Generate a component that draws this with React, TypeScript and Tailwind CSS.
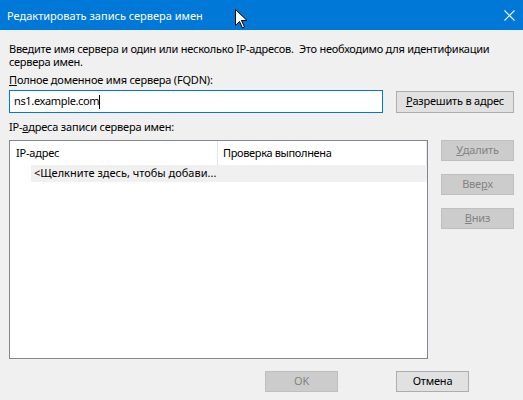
import React from "react";

const font = { fontFamily: '"Noto Sans", "Segoe UI", sans-serif' };

function DisabledButton({ label, u, rest, mt }: { label?: string; u?: string; rest?: string; mt?: string }) {
  return (
    <div
      className={`w-[73px] h-[21px] border border-[#bfbfbf] bg-[#cccccc] text-[#838383] flex items-center justify-center ${mt ?? ""}`}
    >
      {label}
      {u && <span className="underline">{u}</span>}
      {rest}
    </div>
  );
}

function Cursor() {
  return (
    <svg className="absolute left-[235px] top-[9px]" width="13" height="20" viewBox="0 0 13 20">
      <path
        d="M0.5 0.5 L0.5 16.5 L4.5 12.5 L7.5 19 L9.5 18 L6.5 11.5 L12 11.5 Z"
        fill="#fff"
        stroke="#000"
        strokeWidth="1"
      />
    </svg>
  );
}

export default function App() {
  return (
    <div
      className="relative w-[523px] h-[400px] bg-[#f0f0f0] flex flex-col text-[11px] tracking-[-0.2px] text-black"
      style={font}
    >
      {/* заголовок окна */}
      <div className="h-[30px] bg-[#0078d7] flex items-center justify-between pl-[7px] pr-[7px] text-white shrink-0">
        <span className="text-[11px] tracking-normal leading-none">Редактировать запись сервера имен</span>
        <svg width="11" height="11" viewBox="0 0 11 11" className="mr-[1px]">
          <path d="M0.5 0.5 L10.5 10.5 M10.5 0.5 L0.5 10.5" stroke="#fff" strokeWidth="1.1" />
        </svg>
      </div>
      <Cursor />

      <div className="pl-[9px] flex flex-col">
        <p className="mt-[12px] leading-[13px] w-[500px] tracking-[-0.25px]">
          Введите имя сервера и один или несколько IP-адресов.&nbsp; Это необходимо для идентификации сервера имен.
        </p>
        <div className="mt-[5px] leading-[13px]">
          <span className="underline">П</span>олное доменное имя сервера (FQDN):
        </div>

        <div className="mt-[4px] flex items-center">
          <div className="w-[374px] h-[23px] border border-[#0078d7] bg-white flex items-center pl-[4px] tracking-[-0.35px]">
            <span>ns1.example.com</span>
            <span className="inline-block w-[1px] h-[14px] bg-black" />
          </div>
          <button className="ml-[13px] w-[118px] h-[22px] border border-[#adadad] bg-[#e1e1e1] flex items-center justify-center">
            <span className="underline">Р</span>азрешить в адрес
          </button>
        </div>

        <div className="mt-[7px] leading-[13px]">
          IP-<span className="underline">а</span>дреса записи сервера имен:
        </div>

        <div className="mt-[7px] flex items-start">
          <div className="w-[419px] h-[219px] border border-[#828790] bg-white flex flex-col">
            <div className="h-[24px] flex">
              <div className="w-[208px] border-r border-[#e5e5e5] flex items-center pl-[6px]">IP-адрес</div>
              <div className="w-[209px] border-r border-[#e5e5e5] flex items-center pl-[5px] tracking-[-0.35px]">
                Проверка выполнена
              </div>
            </div>
            <div className="ml-[21px] w-[396px] h-[17px] bg-[#f0f0f0] flex items-center pl-[3px] tracking-normal">
              &lt;Щелкните здесь, чтобы добави...
            </div>
          </div>

          <div className="ml-[13px] flex flex-col">
            <DisabledButton u="У" rest="далить" />
            <DisabledButton label="Вве" u="р" rest="х" mt="mt-[13px]" />
            <DisabledButton u="В" rest="низ" mt="mt-[13px]" />
          </div>
        </div>

        <div className="mt-[12px] flex">
          <div className="ml-[256px] w-[73px] h-[21px] border border-[#bfbfbf] bg-[#cccccc] text-[#838383] flex items-center justify-center">
            OK
          </div>
          <button className="ml-[58px] w-[73px] h-[21px] border border-[#adadad] bg-[#e1e1e1] flex items-center justify-center">
            Отмена
          </button>
        </div>
      </div>
    </div>
  );
}
